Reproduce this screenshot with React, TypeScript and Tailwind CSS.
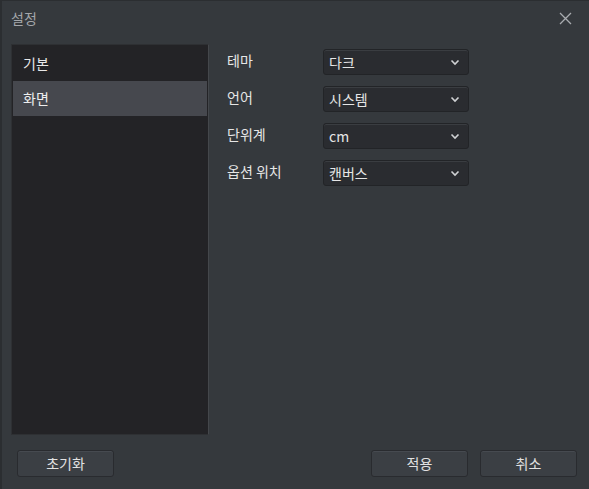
import React from 'react'

const font = { fontFamily: '"Noto Sans CJK KR", "Noto Sans", sans-serif' }

function Chevron() {
    return (
        <svg width="10" height="7" viewBox="0 0 10 7" className="text-[#d0d2d4]">
            <path d="M1.5 1.5 L5 5 L8.5 1.5" fill="none" stroke="currentColor" strokeWidth="1.6" />
        </svg>
    )
}

function Select({value}) {
    return (
        <div className="w-[146px] h-[26px] bg-[#2a2c30] border border-[#222427] rounded-[3px] flex items-center justify-between pl-[5px] pr-[8px] text-[14px] text-[#e6e6e6] shadow-[inset_0_1px_0_#3a3d41]">
            <span>{value}</span>
            <Chevron />
        </div>
    )
}

function Button({label}) {
    return (
        <button className="w-[97px] h-[27px] bg-[#3b3f44] border border-[#292b2f] rounded-[3px] text-[14px] text-[#e2e2e2] shadow-[inset_0_1px_0_#464a50]">
            {label}
        </button>
    )
}

const rows = [
    ['테마', '다크'],
    ['언어', '시스템'],
    ['단위계', 'cm'],
    ['옵션 위치', '캔버스'],
]

export default function App() {
    return (
        <div style={font} className="w-[589px] h-[489px] bg-[#35393d] border-l-2 border-t border-[#2b2e31] flex flex-col">
            <div className="h-[34px] flex items-center justify-between pl-[9px] pr-[17px]">
                <span className="text-[14px] text-[#a4a7ab]">설정</span>
                <svg width="13" height="13" viewBox="0 0 13 13" className="text-[#a9acb0]">
                    <path d="M1 1 L12 12 M12 1 L1 12" stroke="currentColor" strokeWidth="1.3" />
                </svg>
            </div>
            <div className="flex pl-[9px] pt-[9px]">
                <div className="w-[198px] h-[391px] bg-[#232326] border border-[#2e3033] border-r-[#44474b] p-[1px]">
                    <div className="h-[35px] flex items-center pl-[10px] text-[14px] text-[#e8e8e8]">기본</div>
                    <div className="h-[35px] flex items-center pl-[10px] text-[14px] text-[#eeeeee] bg-[#46484e]">화면</div>
                </div>
                <div className="ml-[18px] pt-[5px] flex flex-col gap-[11px]">
                    {rows.map(([label, value]) => (
                        <div key={label} className="flex items-center">
                            <span className="w-[96px] text-[14px] text-[#e6e6e6] -mt-[3px]">{label}</span>
                            <Select value={value} />
                        </div>
                    ))}
                </div>
            </div>
            <div className="flex items-center pl-[15px] pr-[12px] mt-[15px]">
                <Button label="초기화" />
                <div className="flex-1" />
                <Button label="적용" />
                <div className="w-[12px]" />
                <Button label="취소" />
            </div>
        </div>
    )
}
